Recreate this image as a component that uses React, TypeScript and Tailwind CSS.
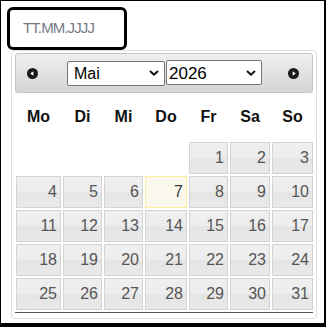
import { useState } from "react";

const weekdays = ["Mo", "Di", "Mi", "Do", "Fr", "Sa", "So"];

const months = [
  "Jan",
  "Feb",
  "Mär",
  "Apr",
  "Mai",
  "Jun",
  "Jul",
  "Aug",
  "Sep",
  "Okt",
  "Nov",
  "Dez",
];

function NavIcon({ dir }: { dir: "prev" | "next" }) {
  return (
    <svg width="11" height="11" viewBox="0 0 11 11" className="shrink-0">
      <circle cx="5.5" cy="5.5" r="5.5" fill="#1b1b1b" />
      {dir === "prev" ? (
        <polygon points="3.2,5.5 6.4,3.2 6.4,7.8" fill="#fff" />
      ) : (
        <polygon points="7.8,5.5 4.6,3.2 4.6,7.8" fill="#fff" />
      )}
    </svg>
  );
}

function Chevron() {
  return (
    <svg
      width="10"
      height="7"
      viewBox="0 0 10 7"
      className="pointer-events-none absolute right-[6px] top-1/2 -translate-y-1/2"
    >
      <path d="M1 1.5 L5 5.2 L9 1.5" fill="none" stroke="#111" strokeWidth="2" />
    </svg>
  );
}

export default function App() {
  const [month, setMonth] = useState(4);
  const [year, setYear] = useState(2026);

  const today = 7;
  const cells: (number | null)[] = [null, null, null, null];
  for (let d = 1; d <= 31; d++) cells.push(d);

  return (
    <div className="h-[327px] w-[326px] border-t border-l border-r-2 border-b-4 border-black bg-white font-['Liberation_Sans',Arial,sans-serif]">
      <div className="ml-[6px] mt-[6px] flex h-[43px] w-[120px] items-center rounded-[6px] border-[3px] border-black bg-white pl-[13px]">
        <input
          type="text"
          placeholder="TT.MM.JJJJ"
          className="w-full bg-transparent text-[15px] tracking-[-0.9px] text-[#333] outline-none placeholder:text-[#757a85]"
        />
      </div>

      <div className="ml-[10px] w-[306px] rounded-[4px] border border-[#dddddd] bg-white px-[3px] pt-[2px] pb-[5px]">
        <div className="flex h-[40px] items-center rounded-[3px] border border-[#c5c5c5] bg-[linear-gradient(#efefef,#d5d5d5)]">
          <span className="ml-[11px]">
            <NavIcon dir="prev" />
          </span>
          <div className="relative ml-[29px]">
            <select
              value={month}
              onChange={(e) => setMonth(Number(e.target.value))}
              className="h-[25px] w-[98px] appearance-none rounded-[2px] border border-[#767676] bg-white pl-[6px] text-[16px] text-black outline-none"
            >
              {months.map((m, i) => (
                <option key={m} value={i}>
                  {m}
                </option>
              ))}
            </select>
            <Chevron />
          </div>
          <div className="relative ml-[1px]">
            <select
              value={year}
              onChange={(e) => setYear(Number(e.target.value))}
              className="h-[25px] w-[96px] appearance-none rounded-[2px] border border-[#767676] bg-white pl-[2px] text-[17px] text-black outline-none"
            >
              {[2024, 2025, 2026, 2027, 2028].map((y) => (
                <option key={y} value={y}>
                  {y}
                </option>
              ))}
            </select>
            <Chevron />
          </div>
          <span className="ml-[26px]">
            <NavIcon dir="next" />
          </span>
        </div>

        <div className="ml-[1px] grid grid-cols-[45px_39px_39px_42px_39px_40px_41px] gap-[2px]">
          {weekdays.map((w) => (
            <div
              key={w}
              className="flex h-[47px] items-center justify-center text-[16px] font-bold text-[#111]"
            >
              {w}
            </div>
          ))}
          {cells.map((d, i) =>
            d === null ? (
              <div key={`e${i}`} className="h-[32px]" />
            ) : d === today ? (
              <div
                key={d}
                className="flex h-[32px] items-center justify-end border border-[#fcefa1] bg-[#fbf9ee] pr-[3px] text-[16px] text-[#363636]"
              >
                {d}
              </div>
            ) : (
              <div
                key={d}
                className="flex h-[32px] items-center justify-end border border-[#d3d3d3] bg-[linear-gradient(#efefef_0%,#ededed_48%,#e5e5e5_52%,#e9e9e9_100%)] pr-[3px] text-[16px] text-[#555]"
              >
                {d}
              </div>
            )
          )}
        </div>

        <div className="mt-[2px] h-px bg-[#555]" />
      </div>
    </div>
  );
}
